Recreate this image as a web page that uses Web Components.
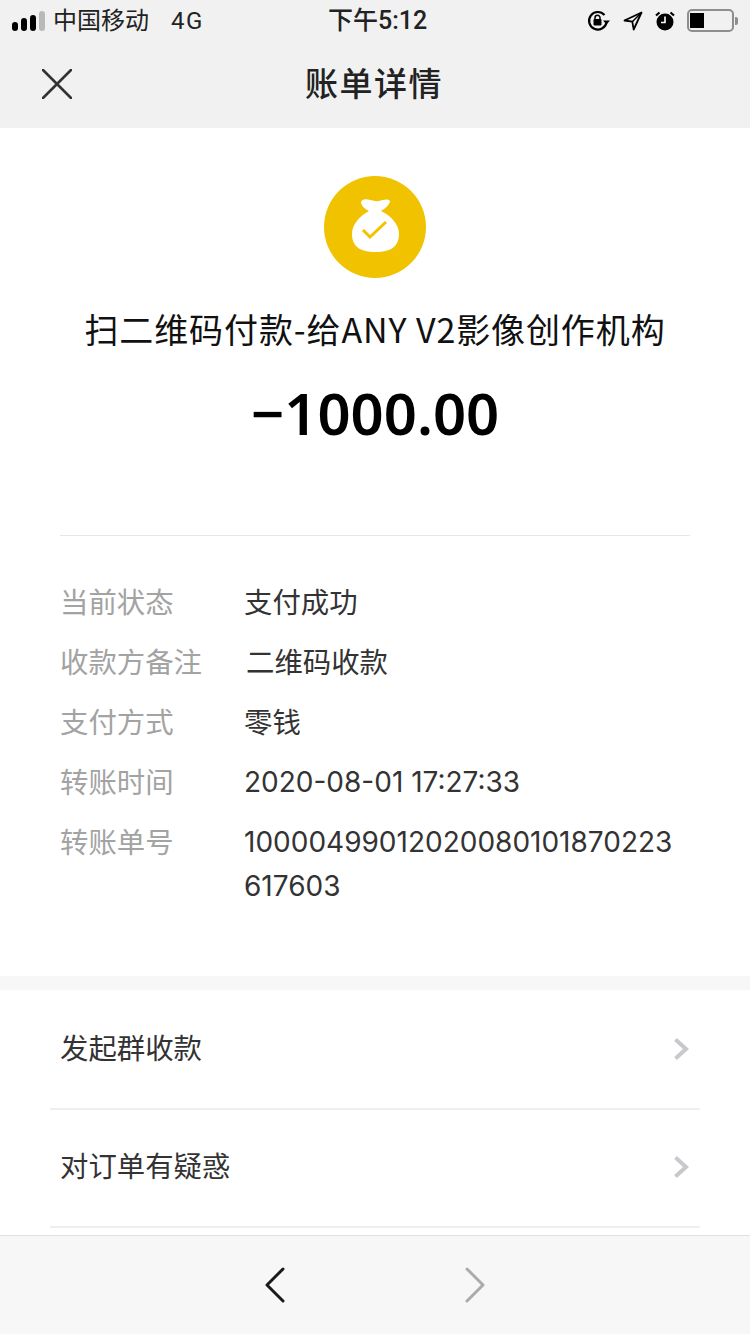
<!DOCTYPE html>
<html lang="zh"><head><meta charset="utf-8"><style>
html,body{margin:0;padding:0;background:#fff}
body{width:750px;height:1334px;overflow:hidden;font-family:"Noto Sans CJK SC","Inter",sans-serif}
</style></head><body>
<bill-page></bill-page>
<script>
const F='"Roboto","Noto Sans CJK SC",sans-serif';
function def(name,html){customElements.define(name,class extends HTMLElement{constructor(){super();this.attachShadow({mode:'open'}).innerHTML=html;}});}
def('status-bar',`<style>
:host{display:flex;align-items:center;height:42px;padding:0 12px;font:24px/40px ${F};color:#222;box-sizing:border-box}
.sig{display:flex;align-items:flex-end;gap:3px;height:20px;margin-right:8px}
.sig i{display:block;width:6px;border-radius:3px;background:#000}
.l{flex:0 0 auto;display:flex;align-items:center;width:316px}
.net{margin-left:22px;letter-spacing:1.5px}
.t{font-size:25px;font-weight:500}
.r{display:flex;align-items:center;margin-left:auto;margin-top:-1px}
svg{display:block}
.bat{display:flex;align-items:center;margin-left:12px}
.bat b{display:block;box-sizing:border-box;width:47px;height:23px;border:2px solid #8e8e8e;border-radius:5px;padding:2px 1px}
.bat b i{display:block;width:14px;height:15px;background:#000}
.bat u{display:block;width:3px;height:8px;background:#8e8e8e;border-radius:0 2px 2px 0;margin-left:1px}
</style>
<div class="l"><div class="sig"><i style="height:9px"></i><i style="height:13px"></i><i style="height:16px"></i><i style="height:20px;background:#b9b9b9"></i></div><span>中国移动</span><span class="net">4G</span></div>
<div class="t">下午5:12</div>
<div class="r">
<svg width="24" height="22" viewBox="0 0 24 22"><path d="M19.500 12.500A8.800 8.800 0 1 1 17.500 5" fill="none" stroke="#000" stroke-width="2.200"/><path d="M23 10.500h-7l3.500 4z" fill="#000"/><rect x="6.500" y="9" width="8" height="6.500" rx="1" fill="#000"/><path d="M8 9.500V7.800a2.500 2.500 0 0 1 5 0v1.700" fill="none" stroke="#000" stroke-width="1.500"/></svg>
<svg style="margin-left:12px" width="20" height="20" viewBox="0 0 20 20"><path d="M18.500 1.500 1.500 9.500l7.800 1.200 1.400 7.800z" fill="none" stroke="#000" stroke-width="1.800" stroke-linejoin="round"/><path d="M18.500 1.500 9.300 10.700" stroke="#000" stroke-width="1.500"/></svg>
<svg style="margin-left:12px" width="20" height="20" viewBox="0 0 20 20"><circle cx="10" cy="11" r="8.500" fill="#000"/><path d="M10 5.500v6H6" fill="none" stroke="#fff" stroke-width="1.600"/><path d="M1 4.500 4.500 1.500M19 4.500l-3.500-3" stroke="#000" stroke-width="2.200"/></svg>
<div class="bat"><b><i></i></b><u></u></div>
</div>`);
def('nav-bar',`<style>
:host{display:flex;align-items:center;height:86px;position:relative;justify-content:center;color:#222}
h1{margin:0;font:500 33px/1 "Noto Sans CJK SC",sans-serif;letter-spacing:1.5px;padding:0 2px 6px 0}
svg{position:absolute;left:42px;top:27px}
</style><svg width="30" height="30" viewBox="0 0 30 30"><path d="M1 1 29 29M29 1 1 29" stroke="#333" stroke-width="2.600" stroke-linecap="round"/></svg><h1>账单详情</h1>`);
def('bill-hero',`<style>
:host{display:flex;flex-direction:column;align-items:center;margin:0 60px;padding-top:48px;height:359px;border-bottom:1px solid #e6e6e6}
svg{display:block}
.n{margin-top:31px;font:34px/40px "Noto Sans CJK SC",sans-serif;color:#111;white-space:nowrap;letter-spacing:.9px}
.a{margin-top:28px;font:600 58px/72px "Noto Sans","Open Sans",sans-serif;color:#000;white-space:nowrap}
</style>
<svg width="102" height="102" viewBox="0 0 102 102"><circle cx="51" cy="51" r="51" fill="#f0c200"/><path d="M37 26C39 21 46 24 51 25C56 26 63 21 66 25C66 28 61 33 57 35C67 40 75 48 75 58C75 71 66 76 51.500 76C37 76 28 71 28 58C28 48 36 40 45 35C41 33 37 30 37 26z" fill="#fff"/><path d="M39 54 46 61 62 46" fill="none" stroke="#f0c200" stroke-width="3"/></svg>
<div class="n">扫二维码付款-给ANY V2影像创作机构</div>
<div class="a">−1000.00</div>`);
class InfoRow extends HTMLElement{constructor(){super();this.attachShadow({mode:'open'}).innerHTML=`<style>
:host{display:grid;grid-template-columns:184px 1fr;font:28.4px/44px "Noto Sans CJK SC",sans-serif;margin-bottom:16px}
.k{color:#a3a3a3;white-space:nowrap}
.v{color:#333;white-space:nowrap;padding-left:${this.getAttribute('pad')||0}px}
.num{font:28px/44px Inter,"Noto Sans CJK SC",sans-serif;margin:1px 0 -1px}
</style><div class="k">${this.getAttribute('k')}</div><div class="v ${this.hasAttribute('num')?'num':''}"><slot></slot></div>`;}}
customElements.define('info-row',InfoRow);
def('info-list',`<style>:host{display:block;margin:0 60px;padding-top:43px;height:397px}</style><slot></slot>`);
def('link-row',`<style>
:host{display:flex;align-items:center;justify-content:space-between;height:116px;margin:0 50px;padding:0 11px 0 10px;border-bottom:2px solid #efefef;font:28.4px/40px "Noto Sans CJK SC",sans-serif;color:#333}
:host([first]){height:118px}
span{margin-bottom:6px}
svg{display:block;margin-bottom:2px}
:host([first]) span{margin-bottom:4px}
:host([first]) svg{margin-bottom:0}
</style><span><slot></slot></span><svg width="16" height="24" viewBox="0 0 16 24"><path d="M2.500 2.500 13 12 2.500 21.500" fill="none" stroke="#c8c8cd" stroke-width="4"/></svg>`);
def('tool-bar',`<style>
:host{display:flex;align-items:center;justify-content:center;gap:176px;height:98px;background:#f7f7f7;border-top:1px solid #e0e0e0;flex:none}
svg{display:block}
</style><svg width="24" height="38" viewBox="0 0 24 38"><path d="M20 3 4 19 20 35" fill="none" stroke="#1a1a1a" stroke-width="3" stroke-linecap="round" stroke-linejoin="round"/></svg><svg width="24" height="38" viewBox="0 0 24 38"><path d="M4 3 20 19 4 35" fill="none" stroke="#ababab" stroke-width="3" stroke-linecap="round" stroke-linejoin="round"/></svg>`);
def('bill-page',`<style>
:host{display:flex;flex-direction:column;height:1334px;width:750px;overflow:hidden;background:#fff}
header{background:#f1f1f1;flex:none}
main{flex:1;overflow:hidden;min-height:0}
.gap{height:14px;background:#f7f7f7}
</style>
<header><status-bar></status-bar><nav-bar></nav-bar></header>
<main><bill-hero></bill-hero>
<info-list><info-row k="当前状态">支付成功</info-row><info-row k="收款方备注" pad="2">二维码收款</info-row><info-row k="支付方式">零钱</info-row><info-row k="转账时间" num>2020-08-01 17:27:33</info-row><info-row k="转账单号" num>10000499012020080101870223<br>617603</info-row></info-list>
<div class="gap"></div>
<link-row first>发起群收款</link-row><link-row>对订单有疑惑</link-row>
</main><tool-bar></tool-bar>`);
</script></body></html>
